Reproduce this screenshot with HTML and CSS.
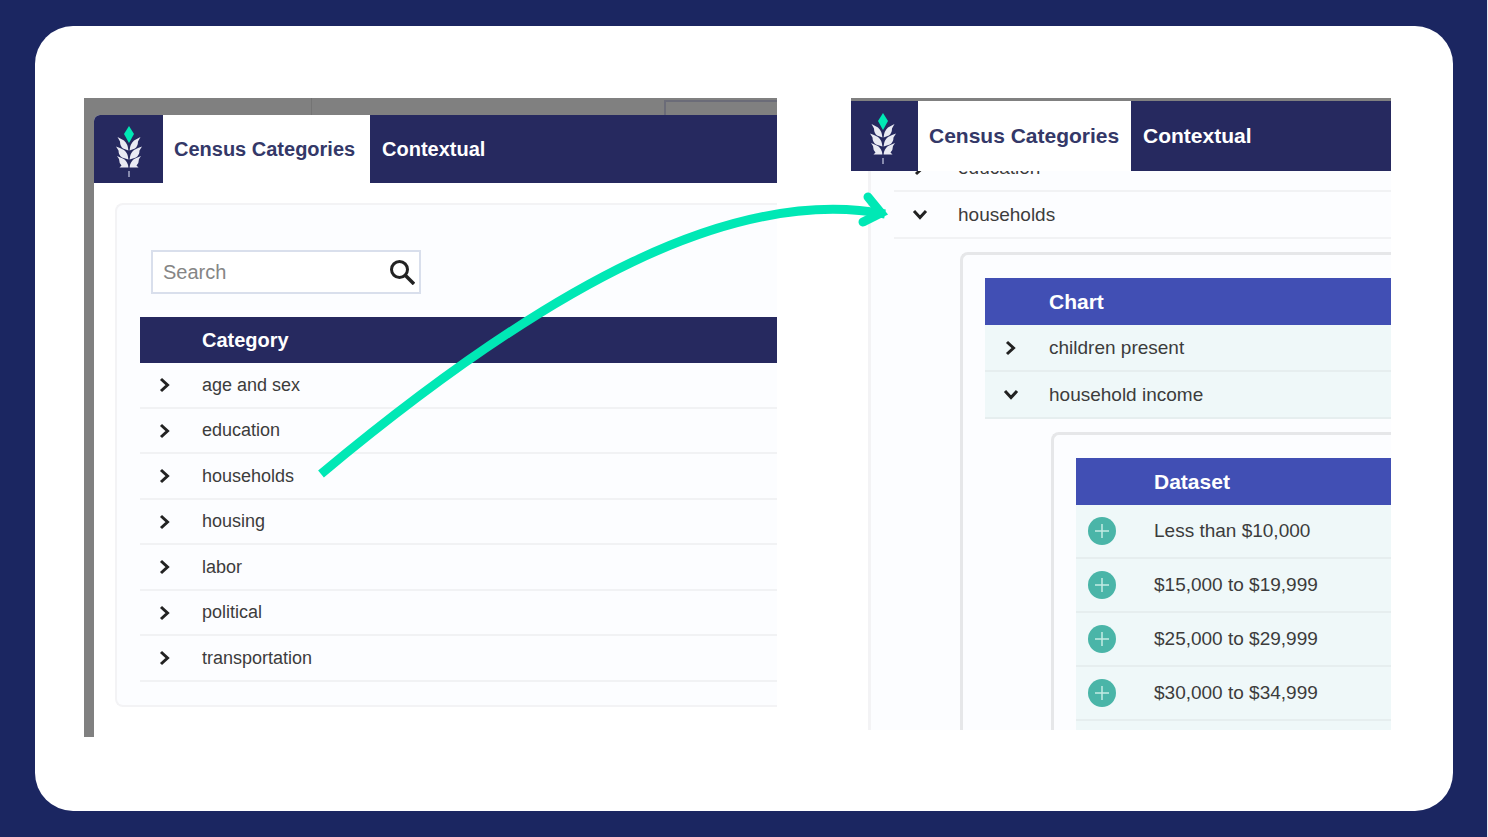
FILE: index.html
```html
<!DOCTYPE html>
<html lang="en">
<head>
    <meta charset="UTF-8">
    <meta name="viewport" content="width=device-width, initial-scale=1.0">
    <title>Census Categories</title>
    <link rel="stylesheet" href="styles.css">
</head>
<body>
    <!-- Shared icons -->
    <svg class="sprite" aria-hidden="true">
        <symbol id="logo" viewBox="0 0 26 52">
            <path fill="#00e8b5" d="M13 0 L18 8 L13 17 L8 8 Z"/>
            <g id="leaves" fill="#e9eaf3">
                <path d="M1.500 11 L8 14.500 Q12 18 12.400 24.500 L7 22.500 Q4 20 4 15.500 Z"/>
                <path d="M0 20.500 L4 22 L8 24 Q12 27 12.400 33.500 L6 31.500 Q2.500 29 2.500 24.500 Z"/>
                <path d="M1 30 L8 33 Q12 36 12.400 41.500 H3.500 L5.500 39.500 Q3 37 3 33 Z"/>
            </g>
            <use href="#leaves" transform="translate(26 0) scale(-1 1)"/>
            <path stroke="#a9abc8" stroke-width="1.500" d="M13 45 V51"/>
        </symbol>
        <symbol id="chevron" viewBox="0 0 16 16">
            <path fill="none" stroke="#222" stroke-width="3" d="M4 2 L10.500 8 L4 14"/>
        </symbol>
        <symbol id="plus" viewBox="0 0 28 28">
            <circle cx="14" cy="14" r="14" fill="#4ab5a8"/>
            <path stroke="#c4ebe4" stroke-width="1.500" d="M14 7 V21 M7 14 H21"/>
        </symbol>
    </svg>

    <main class="card">
        <!-- Before: list of categories -->
        <section class="shot">
            <div class="backdrop">
                <span class="backdrop-line"></span>
                <span class="backdrop-box"></span>
            </div>
            <div class="window">
                <nav class="tabs">
                    <span class="logo"><svg><use href="#logo"/></svg></span>
                    <button class="tab active">Census Categories</button>
                    <button class="tab">Contextual</button>
                </nav>
                <div class="panel">
                    <div class="search">
                        <input type="text" placeholder="Search" aria-label="Search">
                        <button aria-label="Run search">
                            <svg viewBox="0 0 26 26"><circle cx="10.500" cy="10.500" r="8" fill="none" stroke="#222" stroke-width="3"/><path stroke="#222" stroke-width="3.500" d="M16 16 L25 25"/></svg>
                        </button>
                    </div>
                    <table class="categories">
                        <thead>
                            <tr><th class="icon-cell"></th><th>Category</th></tr>
                        </thead>
                        <tbody>
                            <tr><td class="icon-cell"><button aria-label="Expand age and sex"><svg class="chevron"><use href="#chevron"/></svg></button></td><td>age and sex</td></tr>
                            <tr><td class="icon-cell"><button aria-label="Expand education"><svg class="chevron"><use href="#chevron"/></svg></button></td><td>education</td></tr>
                            <tr><td class="icon-cell"><button aria-label="Expand households"><svg class="chevron"><use href="#chevron"/></svg></button></td><td>households</td></tr>
                            <tr><td class="icon-cell"><button aria-label="Expand housing"><svg class="chevron"><use href="#chevron"/></svg></button></td><td>housing</td></tr>
                            <tr><td class="icon-cell"><button aria-label="Expand labor"><svg class="chevron"><use href="#chevron"/></svg></button></td><td>labor</td></tr>
                            <tr><td class="icon-cell"><button aria-label="Expand political"><svg class="chevron"><use href="#chevron"/></svg></button></td><td>political</td></tr>
                            <tr><td class="icon-cell"><button aria-label="Expand transportation"><svg class="chevron"><use href="#chevron"/></svg></button></td><td>transportation</td></tr>
                        </tbody>
                    </table>
                </div>
            </div>
        </section>

        <!-- After: households opened -->
        <section class="shot shot-open">
            <nav class="tabs">
                <span class="logo"><svg><use href="#logo"/></svg></span>
                <button class="tab active">Census Categories</button>
                <button class="tab">Contextual</button>
            </nav>
            <div class="scroll">
                <table class="scrolled">
                    <tbody>
                        <tr><td class="icon-cell"><button aria-label="Expand education"><svg class="chevron"><use href="#chevron"/></svg></button></td><td>education</td></tr>
                        <tr><td class="icon-cell"><button aria-label="Collapse households"><svg class="chevron down"><use href="#chevron"/></svg></button></td><td>households</td></tr>
                        <tr>
                            <td class="detail" colspan="2">
                                <div class="nested">
                                    <table class="tinted">
                                        <thead>
                                            <tr><th class="icon-cell"></th><th>Chart</th></tr>
                                        </thead>
                                        <tbody>
                                            <tr><td class="icon-cell"><button aria-label="Expand children present"><svg class="chevron"><use href="#chevron"/></svg></button></td><td>children present</td></tr>
                                            <tr><td class="icon-cell"><button aria-label="Collapse household income"><svg class="chevron down"><use href="#chevron"/></svg></button></td><td>household income</td></tr>
                                            <tr>
                                                <td class="detail" colspan="2">
                                                    <div class="nested">
                                                        <table class="tinted datasets">
                                                            <thead>
                                                                <tr><th class="icon-cell"></th><th>Dataset</th></tr>
                                                            </thead>
                                                            <tbody>
                                                                <tr><td class="icon-cell"><button aria-label="Add Less than $10,000"><svg class="plus"><use href="#plus"/></svg></button></td><td>Less than $10,000</td></tr>
                                                                <tr><td class="icon-cell"><button aria-label="Add $15,000 to $19,999"><svg class="plus"><use href="#plus"/></svg></button></td><td>$15,000 to $19,999</td></tr>
                                                                <tr><td class="icon-cell"><button aria-label="Add $25,000 to $29,999"><svg class="plus"><use href="#plus"/></svg></button></td><td>$25,000 to $29,999</td></tr>
                                                                <tr><td class="icon-cell"><button aria-label="Add $30,000 to $34,999"><svg class="plus"><use href="#plus"/></svg></button></td><td>$30,000 to $34,999</td></tr>
                                                                <tr><td class="icon-cell"></td><td></td></tr>
                                                            </tbody>
                                                        </table>
                                                    </div>
                                                </td>
                                            </tr>
                                        </tbody>
                                    </table>
                                </div>
                            </td>
                        </tr>
                    </tbody>
                </table>
            </div>
        </section>

        <!-- Arrow from households to its opened row -->
        <svg class="arrow" viewBox="0 0 1418 785" preserveAspectRatio="xMidYMin meet" aria-hidden="true">
            <path d="M286 448 C515 257 700 160 850 188"/>
            <path stroke-linecap="round" d="M833 171 L846 187 L828 196"/>
        </svg>
    </main>
</body>
</html>
```
FILE: styles.css
```css
* {
    margin: 0;
    padding: 0;
    box-sizing: border-box;
}

body {
    min-height: 100vh;
    padding: 26px 34px 26px 35px;
    border-right: 1px solid #e4e6ee;
    background-color: #1b2661;
    font-family: "Liberation Sans", Arial, sans-serif;
    font-size: 18px;
    color: #3c3c3c;
}

button {
    border: none;
    background: none;
    font: inherit;
    color: inherit;
    cursor: pointer;
}

svg {
    display: block;
}

.sprite {
    position: absolute;
    width: 0;
    height: 0;
}

/* White card */
.card {
    position: relative;
    display: grid;
    grid-template-columns: 693fr 540fr;
    gap: 74px;
    align-items: start;
    min-height: calc(100vh - 52px);
    padding: 72px 62px 72px 49px;
    border-radius: 38px;
    background-color: #fff;
}

.shot {
    overflow: hidden;
    padding-left: 10px;
    background-color: #808080;
}

/* Dimmed page behind the window */
.backdrop {
    display: flex;
    justify-content: space-between;
    height: 17px;
    padding-left: 217px;
}

.backdrop-line {
    border-left: 1px solid #747474;
}

.backdrop-box {
    width: 113px;
    margin-top: 2px;
    border: solid #6b6c78;
    border-width: 2px 0 0 2px;
}

.window {
    overflow: hidden;
    padding-bottom: 30px;
    border-top-left-radius: 6px;
    background-color: #fff;
}

/* Tabs */
.tabs {
    display: flex;
    height: 68px;
    background-color: #26295f;
    font-size: 20px;
    font-weight: bold;
    color: #fff;
}

.logo {
    display: flex;
    justify-content: center;
    align-items: flex-end;
    width: 69px;
    padding-bottom: 5px;
}

.logo svg {
    width: 26px;
    height: 52px;
}

.tab {
    padding: 0 12px;
    text-align: left;
}

.tab.active {
    min-width: 207px;
    padding: 0 11px;
    background-color: #fff;
    color: #343868;
}

/* Category panel */
.panel {
    margin: 20px 0 0 21px;
    padding: 45px 0 23px 23px;
    border: 2px solid #f3f3f5;
    border-right: none;
    border-radius: 8px 0 0 8px;
    background-color: #fcfdff;
}

.search {
    display: flex;
    align-items: center;
    width: 270px;
    height: 44px;
    margin: 0 0 23px 11px;
    border: 2px solid #d9dfec;
    background-color: #fff;
}

.search input {
    flex: 1;
    min-width: 0;
    padding-left: 10px;
    border: none;
    outline: none;
    font: inherit;
    font-size: 20px;
}

.search input::placeholder {
    color: #858585;
}

.search button {
    padding-right: 4px;
}

.search svg {
    width: 26px;
    height: 26px;
}

/* Tables */
table {
    width: 100%;
    border-collapse: separate;
    border-spacing: 0;
}

th,
td {
    height: 46px;
    text-align: left;
    vertical-align: middle;
}

th {
    background-color: #26295f;
    font-size: 20px;
    color: #fff;
}

td {
    border-bottom: 2px solid #f1f2f4;
}

.categories tr:nth-child(even) td {
    height: 45px;
}

.icon-cell {
    width: 62px;
    padding-left: 17px;
}

.icon-cell button {
    display: block;
}

.chevron {
    width: 16px;
    height: 16px;
}

.chevron.down {
    transform: rotate(90deg);
}

.plus {
    width: 28px;
    height: 28px;
}

/* Opened view */
.shot-open {
    max-height: 632px;
    padding: 3px 0 0;
    font-size: 19px;
}

.shot-open .tabs {
    height: 70px;
    font-size: 21px;
}

.shot-open .logo {
    width: 67px;
    padding: 0 4px 6px 0;
}

.shot-open .tab.active {
    min-width: 213px;
}

.scroll {
    overflow: hidden;
    padding-left: 17px;
    background: linear-gradient(to right, #fff 17px, #fcfdff 17px);
}

/* Scrolled down, so the first row shows only its lower part */
.scrolled {
    margin-top: -26px;
    padding-left: 23px;
    border-left: 3px solid #f3f3f5;
}

.shot-open th,
.shot-open td {
    height: 47px;
}

.shot-open .icon-cell {
    width: 64px;
    padding-left: 18px;
}

.shot-open .detail {
    padding: 13px 0 0 66px;
    border-bottom: none;
    background-color: #fcfdff;
}

.nested {
    padding: 23px 0 23px 22px;
    border: 3px solid #e6e7e9;
    border-right: none;
    border-radius: 8px 0 0 8px;
}

.tinted th {
    background-color: #414fb4;
    font-size: 21px;
}

.tinted td {
    border-bottom-color: #e6eeef;
    background-color: #eff8f9;
}

.shot-open .datasets td {
    height: 54px;
}

.shot-open .datasets .icon-cell {
    width: 78px;
    padding-left: 12px;
}

/* Arrow */
.arrow {
    position: absolute;
    top: 0;
    left: 0;
    width: 100%;
    height: 100%;
    fill: none;
    stroke: #00e8b5;
    stroke-width: 9px;
    pointer-events: none;
}
```
